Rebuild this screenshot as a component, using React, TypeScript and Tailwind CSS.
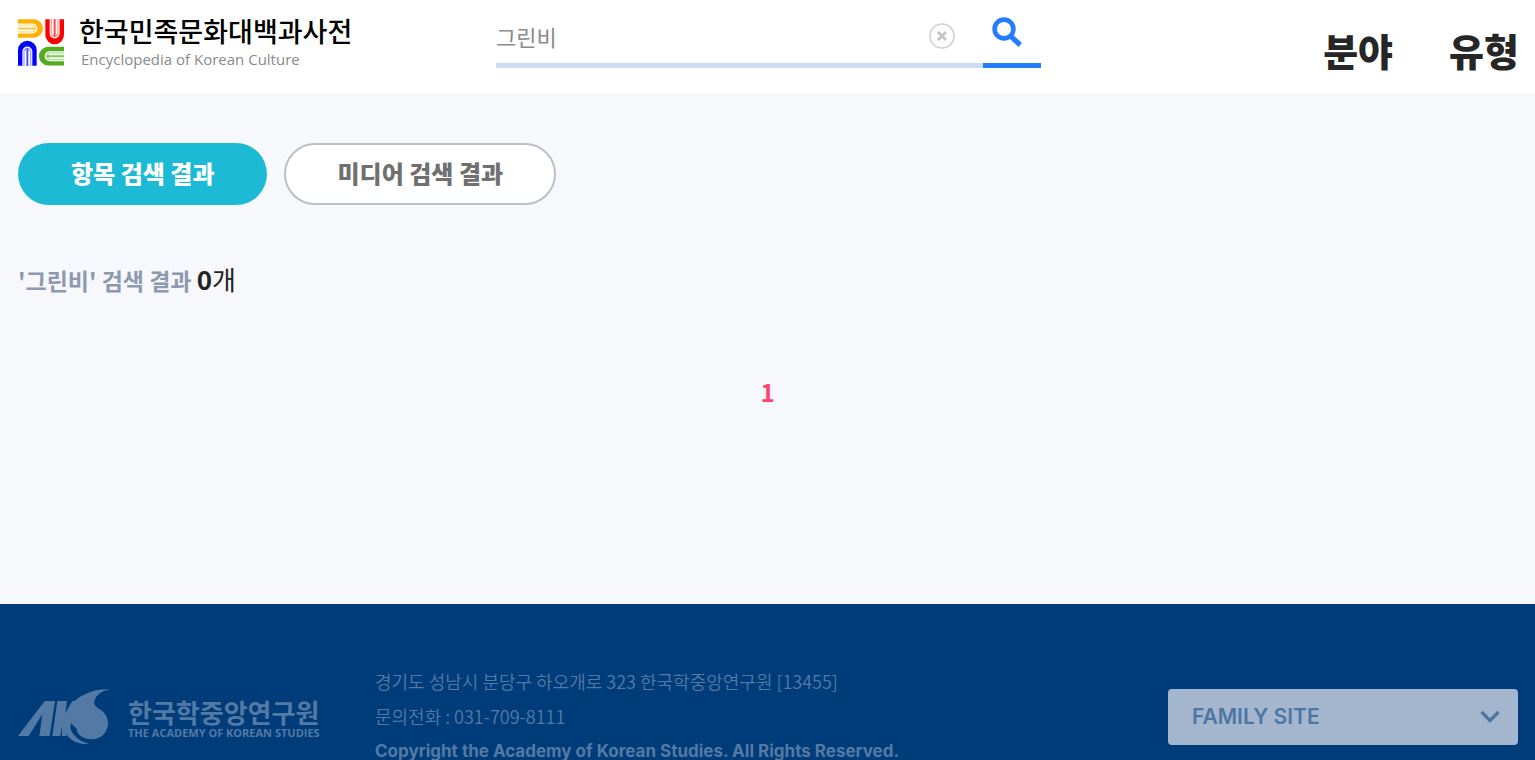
import React from "react";

function BookShape({ color, light, transform }: { color: string; light: string; transform: string }) {
  return (
    <g transform={transform}>
      <path d="M0 0H47A28 28 0 0 1 47 56H0Z" fill={color} />
      <path d="M0 13H43A15 15 0 0 1 43 43H0Z" fill="#fff" />
      <path d="M0 16H42A12 12 0 0 1 42 40H0Z" fill={light} />
      <path d="M0 22H45M0 34H45" stroke="#fff" strokeWidth="4" />
      <path d="M0 28H54" stroke={color} strokeWidth="2" />
    </g>
  );
}

function EncyclopediaMark() {
  return (
    <svg viewBox="0 0 138 140" className="h-[47px] w-[46px] shrink-0" aria-hidden="true">
      <BookShape color="#ffb000" light="#ffdc8c" transform="translate(0 0)" />
      <BookShape color="#ff0000" light="#ff9c9c" transform="translate(138 0) rotate(90)" />
      <BookShape color="#0000ff" light="#a4a4ff" transform="translate(0 140) rotate(-90)" />
      <BookShape color="#55ab22" light="#b4dc9c" transform="translate(138 139) rotate(180)" />
    </svg>
  );
}

function AcademyMark() {
  return (
    <svg viewBox="0 0 276 168" className="h-14 w-[92px] shrink-0" fill="#537aa5" aria-hidden="true">
      <path d="M0 141L80 36H111L95 141H64L73 76L32 141Z" />
      <path d="M118 36H147L142 73L163 36H184L158 80L148 106L146 141H132L131 112L127 141H103Z" />
      <path d="M276 1C225 -2 174 21 152 57C130 94 135 135 163 154C180 165 201 167 214 163C190 160 170 146 160 126C156 116 157 108 160 101C164 108 169 113 176 118C175 135 194 151 221 151C250 151 270 130 270 103C270 82 258 68 243 59C229 51 226 44 231 31C237 15 253 6 276 1Z" />
    </svg>
  );
}

function Header() {
  return (
    <header className="grid h-[93px] shrink-0 grid-cols-[1fr_545px_1fr] bg-white pr-4 pl-[18px]">
      <a href="#home" className="flex items-start pt-[14px] text-black">
        <span className="pt-[5px]">
          <EncyclopediaMark />
        </span>
        <span className="ml-[15px] flex flex-col whitespace-nowrap">
          <span className="text-[27px] leading-[34px] font-medium">한국민족문화대백과사전</span>
          <span className="pl-[2px] font-['Open_Sans','Noto_Sans_CJK_KR',sans-serif] text-[15px] leading-[22px] text-[#8a8a8a]">
            Encyclopedia of Korean Culture
          </span>
        </span>
      </a>

      <form role="search" className="flex h-[68px]" onSubmit={(e) => e.preventDefault()}>
        <div className="flex min-w-0 flex-1 items-center border-b-5 border-[#cddcf3] pt-2 pr-7">
          <input
            type="text"
            aria-label="검색어"
            defaultValue="그린비"
            className="min-w-0 flex-1 bg-transparent text-[22px] leading-8 text-[#8b8b8b] outline-none"
          />
          <button type="button" aria-label="지우기" className="shrink-0">
            <svg viewBox="0 0 26 26" className="size-[26px]" fill="none">
              <circle cx="13" cy="13" r="12" stroke="#cfcfcf" strokeWidth="1.5" />
              <path d="M9 9L17 17M17 9L9 17" stroke="#c4c4c4" strokeWidth="2.8" />
            </svg>
          </button>
        </div>
        <button
          type="submit"
          aria-label="검색"
          className="flex w-[58px] items-start border-b-5 border-[#247efb] pt-[17px] pl-[9px]"
        >
          <svg viewBox="0 0 30 30" className="size-[30px]" fill="none" stroke="#247efb">
            <circle cx="12" cy="12" r="9.4" strokeWidth="4.6" />
            <path d="M18.5 19L28.2 28" strokeWidth="5.2" />
          </svg>
        </button>
      </form>

      <nav className="flex items-center justify-end gap-14 pt-1.5 text-[38px] leading-none font-black text-[#262626]">
        <a href="#field">분야</a>
        <a href="#type">유형</a>
      </nav>
    </header>
  );
}

function Results() {
  return (
    <main className="flex h-[511px] shrink-0 flex-col px-[18px] pt-[50px]">
      <div className="flex gap-[17px] text-2xl font-black">
        <button type="button" className="h-[62px] rounded-full bg-[#1cbad4] px-[53px] pb-[2px] text-white">
          항목 검색 결과
        </button>
        <button
          type="button"
          className="h-[62px] rounded-full border-2 border-[#bdbfc7] bg-white px-[51px] pb-[2px] text-[#707070]"
        >
          미디어 검색 결과
        </button>
      </div>
      <h1 className="mt-14 text-[23px] leading-9 font-bold text-[#8d99b1]">
        '그린비' 검색 결과{" "}
        <span className="text-[26px] font-normal text-[#222]">
          <strong className="font-bold">0</strong>개
        </span>
      </h1>
      <nav aria-label="페이지" className="mt-[76px] flex justify-center">
        <a href="#page-1" aria-current="page" className="text-2xl leading-9 font-bold text-[#ff4271]">
          1
        </a>
      </nav>
    </main>
  );
}

function Footer() {
  return (
    <footer className="flex flex-1 items-start bg-[#003c79] pt-[60px] pr-[17px] pl-[18px] text-[#537aa5]">
      <a href="#academy" className="mt-[25px] flex w-[357px] shrink-0 items-start">
        <AcademyMark />
        <span className="mt-[7px] ml-[18px] flex flex-col whitespace-nowrap">
          <span className="text-[26px] leading-[31px] font-bold">한국학중앙연구원</span>
          <span className="font-['Open_Sans',sans-serif] text-[11px] leading-3 font-bold">
            THE ACADEMY OF KOREAN STUDIES
          </span>
        </span>
      </a>
      <div className="text-lg leading-[35px] whitespace-nowrap">
        <address className="font-[350] not-italic">
          <p>경기도 성남시 분당구 하오개로 323 한국학중앙연구원 [13455]</p>
          <p>문의전화 : 031-709-8111</p>
        </address>
        <p className="font-['Inter',sans-serif] text-[17px] font-bold">
          Copyright the Academy of Korean Studies. All Rights Reserved.
        </p>
      </div>
      <div className="relative mt-[25px] ml-auto w-[350px]">
        <select
          aria-label="FAMILY SITE"
          className="h-14 w-full appearance-none rounded bg-[#a4b6ce] px-6 font-['Inter',sans-serif] text-[21px] font-semibold text-[#4c77a5]"
        >
          <option>FAMILY SITE</option>
        </select>
        <svg
          viewBox="0 0 20 14"
          className="pointer-events-none absolute top-[21px] right-[18px] h-[14px] w-5"
          fill="none"
          stroke="#4c77a5"
          strokeWidth="3.4"
        >
          <path d="M1.5 2L10 10.5L18.5 2" />
        </svg>
      </div>
    </footer>
  );
}

export default function App() {
  return (
    <div className="flex h-screen flex-col overflow-hidden bg-[#f7f8fc] font-['Noto_Sans_CJK_KR',sans-serif]">
      <Header />
      <Results />
      <Footer />
    </div>
  );
}
